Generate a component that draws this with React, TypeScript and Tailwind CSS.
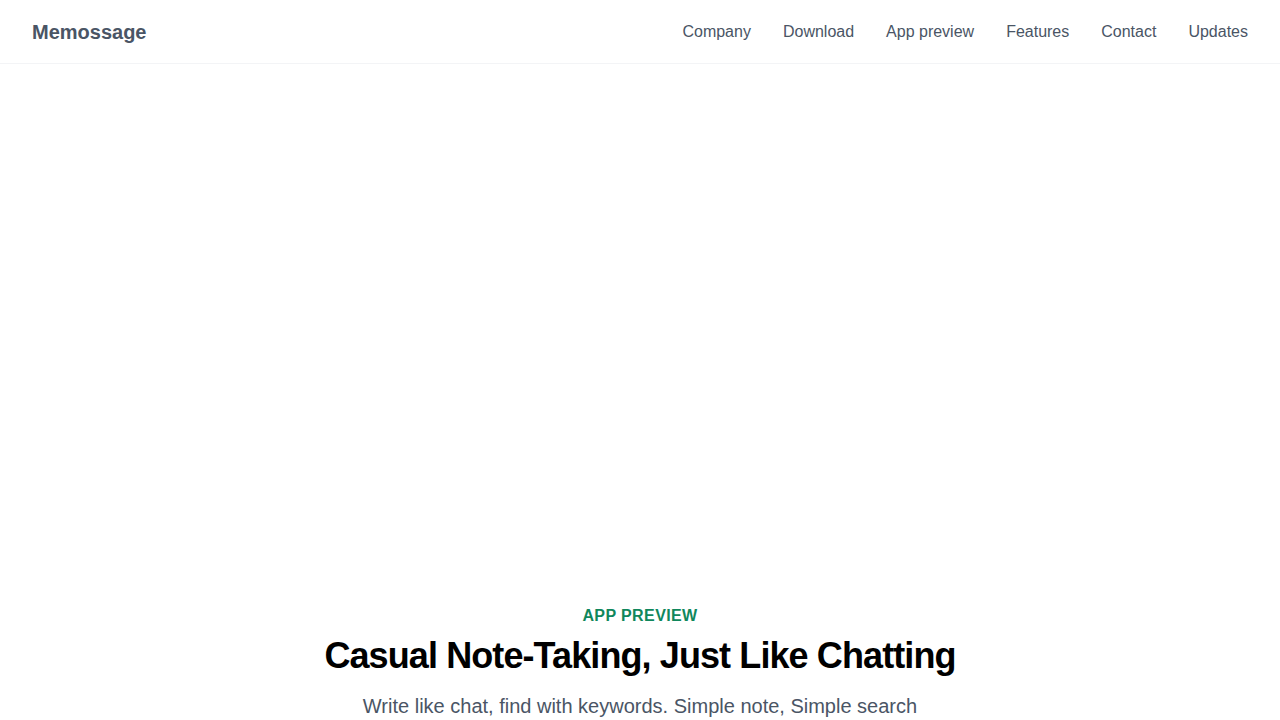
import React from 'react';

const links = ['Company', 'Download', 'App preview', 'Features', 'Contact', 'Updates'];

export default function App() {
  return (
    <div className="min-h-screen bg-white" style={{ fontFamily: '"Liberation Sans", Arial, sans-serif' }}>
      <header className="h-16 flex items-center justify-between px-8 border-b border-gray-100">
        <div className="text-xl font-bold text-gray-600">Memossage</div>
        <nav className="flex items-center gap-8">
          {links.map((l) => (
            <a key={l} href="#" className="text-base text-gray-600">
              {l}
            </a>
          ))}
        </nav>
      </header>

      {/* hero placeholder */}
      <section className="h-[540px]" />

      <section className="flex flex-col items-center text-center">
        <p className="text-base font-bold text-[#10875c] tracking-wide">APP PREVIEW</p>
        <h2 className="mt-2 text-4xl font-bold tracking-tight text-black">Casual Note-Taking, Just Like Chatting</h2>
        <p className="mt-4 text-xl text-gray-600">Write like chat, find with keywords. Simple note, Simple search</p>
      </section>
    </div>
  );
}
